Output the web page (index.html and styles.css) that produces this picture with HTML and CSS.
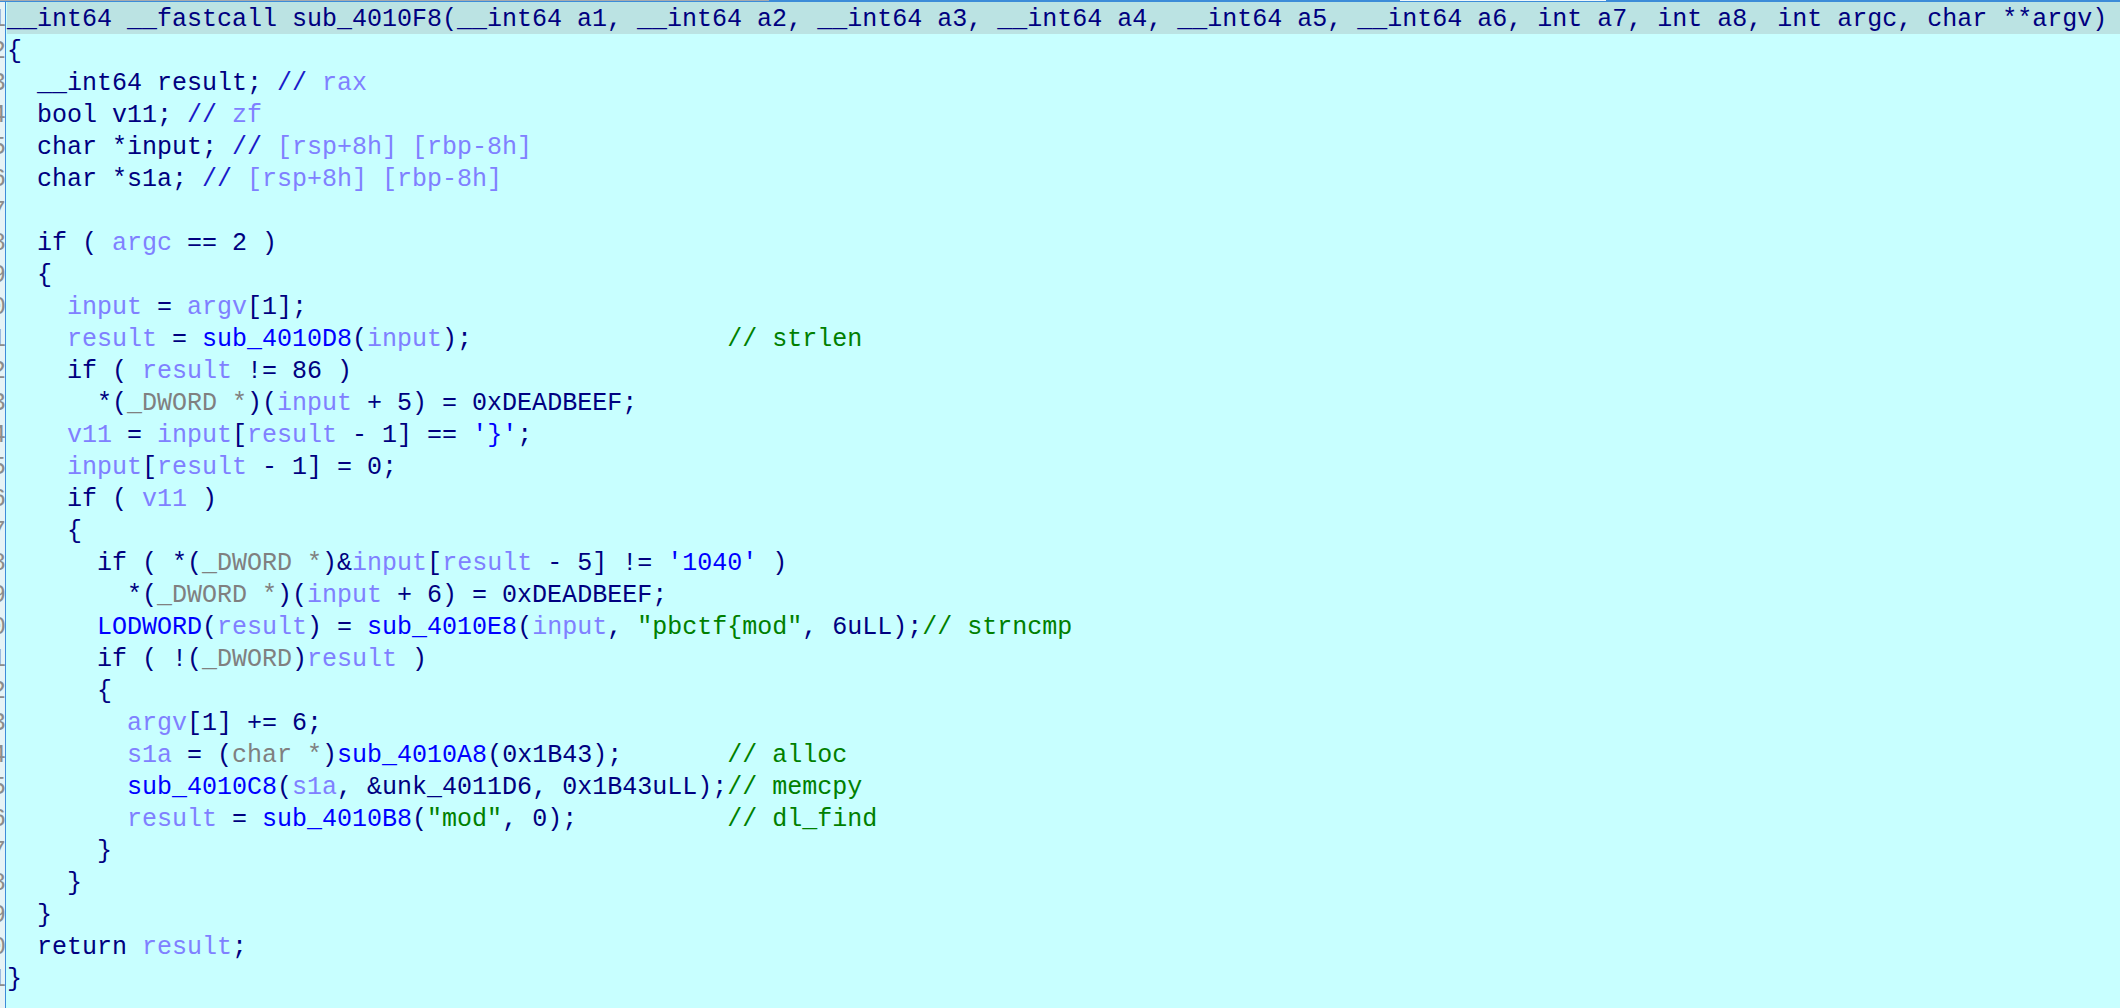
FILE: index.html
```html
<!DOCTYPE html>
<html>
<head>
<meta charset="utf-8">
<link rel="stylesheet" href="styles.css">
</head>
<body>
<div class="topline"><span class="seg gray"></span><span class="seg blue1"></span><span class="seg white"></span><span class="seg blue2"></span></div>
<div class="topline2"></div>
<div class="view">
<div class="gutter">
<div class="n">1</div><div class="n">2</div><div class="n">3</div><div class="n">4</div><div class="n">5</div><div class="n">6</div><div class="n">7</div><div class="n">8</div><div class="n">9</div><div class="n">10</div><div class="n">11</div><div class="n">12</div><div class="n">13</div><div class="n">14</div><div class="n">15</div><div class="n">16</div><div class="n">17</div><div class="n">18</div><div class="n">19</div><div class="n">20</div><div class="n">21</div><div class="n">22</div><div class="n">23</div><div class="n">24</div><div class="n">25</div><div class="n">26</div><div class="n">27</div><div class="n">28</div><div class="n">29</div><div class="n">30</div><div class="n">31</div>
</div>
<div class="code">
<div class="ln head">__int64 __fastcall sub_4010F8(__int64 a1, __int64 a2, __int64 a3, __int64 a4, __int64 a5, __int64 a6, int a7, int a8, int argc, char **argv)</div>
<div class="ln">{</div>
<div class="ln">  __int64 result; <span class="sl">//</span> <span class="v">rax</span></div>
<div class="ln">  bool v11; <span class="sl">//</span> <span class="v">zf</span></div>
<div class="ln">  char *input; <span class="sl">//</span> <span class="v">[rsp+8h] [rbp-8h]</span></div>
<div class="ln">  char *s1a; <span class="sl">//</span> <span class="v">[rsp+8h] [rbp-8h]</span></div>
<div class="ln"> </div>
<div class="ln">  if ( <span class="v">argc</span> == 2 )</div>
<div class="ln">  {</div>
<div class="ln">    <span class="v">input</span> = <span class="v">argv</span>[1];</div>
<div class="ln">    <span class="v">result</span> = <span class="f">sub_4010D8</span>(<span class="v">input</span>);                 <span class="c">// strlen</span></div>
<div class="ln">    if ( <span class="v">result</span> != 86 )</div>
<div class="ln">      *(<span class="t">_DWORD *</span>)(<span class="v">input</span> + 5) = 0xDEADBEEF;</div>
<div class="ln">    <span class="v">v11</span> = <span class="v">input</span>[<span class="v">result</span> - 1] == <span class="f">'}'</span>;</div>
<div class="ln">    <span class="v">input</span>[<span class="v">result</span> - 1] = 0;</div>
<div class="ln">    if ( <span class="v">v11</span> )</div>
<div class="ln">    {</div>
<div class="ln">      if ( *(<span class="t">_DWORD *</span>)&amp;<span class="v">input</span>[<span class="v">result</span> - 5] != <span class="f">'1040'</span> )</div>
<div class="ln">        *(<span class="t">_DWORD *</span>)(<span class="v">input</span> + 6) = 0xDEADBEEF;</div>
<div class="ln">      <span class="f">LODWORD</span>(<span class="v">result</span>) = <span class="f">sub_4010E8</span>(<span class="v">input</span>, <span class="c">"pbctf{mod"</span>, 6uLL);<span class="c">// strncmp</span></div>
<div class="ln">      if ( !(<span class="t">_DWORD</span>)<span class="v">result</span> )</div>
<div class="ln">      {</div>
<div class="ln">        <span class="v">argv</span>[1] += 6;</div>
<div class="ln">        <span class="v">s1a</span> = (<span class="t">char *</span>)<span class="f">sub_4010A8</span>(0x1B43);       <span class="c">// alloc</span></div>
<div class="ln">        <span class="f">sub_4010C8</span>(<span class="v">s1a</span>, &amp;unk_4011D6, 0x1B43uLL);<span class="c">// memcpy</span></div>
<div class="ln">        <span class="v">result</span> = <span class="f">sub_4010B8</span>(<span class="c">"mod"</span>, 0);          <span class="c">// dl_find</span></div>
<div class="ln">      }</div>
<div class="ln">    }</div>
<div class="ln">  }</div>
<div class="ln">  return <span class="v">result</span>;</div>
<div class="ln">}</div>
</div>
</div>
</body>
</html>
```

FILE: styles.css
```css
html, body {
  margin: 0;
  padding: 0;
}
body {
  background: #C8FFFF;
  font-family: "Liberation Mono", "DejaVu Sans Mono", monospace;
  font-size: 25px;
  color: #000080;
  height: 1008px;
  overflow: hidden;
}
.topline {
  display: flex;
  height: 1px;
}
.seg { display: block; height: 1px; }
.seg.gray { width: 769px; background: #A6A9AE; }
.seg.blue1 { width: 631px; background: #3C8CD8; }
.seg.white { width: 206px; background: #EEF6FA; }
.seg.blue2 { flex: 1; background: #3C8CD8; }
.topline2 {
  height: 1px;
  background: #3C8CD8;
}
.view {
  display: flex;
  height: 1006px;
}
.gutter {
  width: 5px;
  flex: none;
  border-right: 1px solid #3C8CD8;
  background: #E6F3F6;
  overflow: hidden;
  color: #8C8C8C;
  direction: rtl;
}
.gutter .n {
  height: 32px;
  line-height: 36px;
  white-space: nowrap;
  text-align: right;
  margin-right: -1px;
}
.code {
  flex: 1;
  padding-left: 1px;
}
.ln {
  height: 32px;
  line-height: 36px;
  white-space: pre;
}
.ln.head {
  background: #BBE3E3;
}
.v { color: #8080FF; }
.f { color: #0000FF; }
.c { color: #008000; }
.t { color: #808080; }
.sl { color: #1A1AC8; }
```
